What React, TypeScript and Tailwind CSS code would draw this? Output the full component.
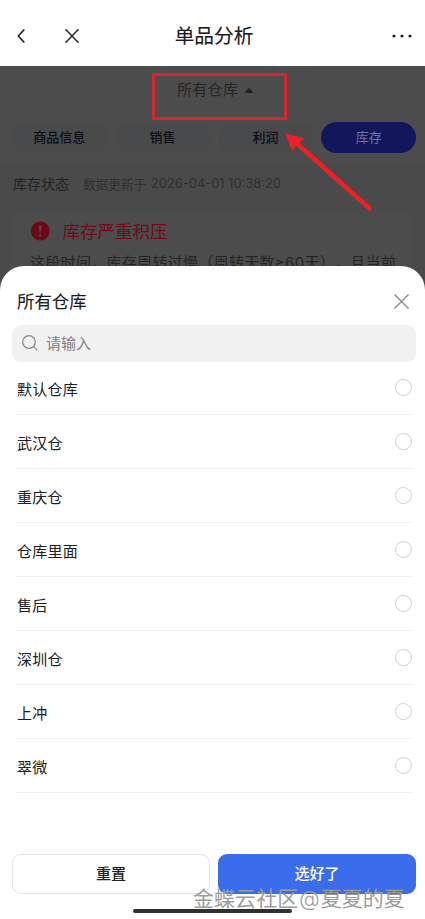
import { useState } from "react"

const warehouses = ["默认仓库", "武汉仓", "重庆仓", "仓库里面", "售后", "深圳仓", "上冲", "翠微"]

const tabs = ["商品信息", "销售", "利润", "库存"]

function Header() {
  return (
    <header className="relative h-[66px] shrink-0 flex items-center justify-between bg-white pl-[17px] pr-[13px] pt-[5px]">
      <div className="flex items-center gap-[40px]">
        <svg width="8" height="14" viewBox="0 0 8 14" fill="none" stroke="#222" strokeWidth="1.6">
          <path d="M7.3 0.5L1.3 7L7.3 13.5" />
        </svg>
        <svg width="14" height="14" viewBox="0 0 14 14" fill="none" stroke="#222" strokeWidth="1.5">
          <path d="M0.5 0.3L13.5 13.7M13.5 0.3L0.5 13.7" />
        </svg>
      </div>
      <h1 className="absolute inset-x-0 top-[20px] pl-[3px] text-center text-[19.7px] leading-[29px] font-normal text-[#1c1c1c] [-webkit-text-stroke:0.15px_#1c1c1c]">
        单品分析
      </h1>
      <svg width="20" height="4" viewBox="0 0 20 4" fill="#222">
        <circle cx="2" cy="2" r="1.6" />
        <circle cx="10" cy="2" r="1.6" />
        <circle cx="18" cy="2" r="1.6" />
      </svg>
    </header>
  )
}

function DimmedPage() {
  return (
    <section className="h-[224px] shrink-0 bg-[#4a4a4a]">
      <div className="h-[98px] bg-[#4c4c4c]">
        <div className="flex h-[56px] items-start gap-[7px] pl-[177px] pt-[12px]">
          <span className="text-[15px] leading-[22px] tracking-[0.3px] text-[#252525]">所有仓库</span>
          <svg className="mt-[10px]" width="8" height="5" viewBox="0 0 8 5" fill="#202020">
            <path d="M3.3 0.5Q4 0 4.7 0.5L7.6 3.7Q8 4.6 7.2 5H0.8Q0 4.6 0.4 3.7Z" />
          </svg>
        </div>
        <div className="grid grid-cols-4 gap-[8.5px] pl-[12px] pr-[9px]">
          {tabs.map((tab) => (
            <div
              key={tab}
              className={
                tab === "库存"
                  ? "h-[31px] rounded-full bg-[#12165a] text-center text-[13px] leading-[30px] font-normal text-[#74769a]"
                  : "h-[31px] rounded-full bg-[#484a4c] text-center text-[13px] leading-[30px] font-medium text-[#0c0d12]"
              }
            >
              {tab}
            </div>
          ))}
        </div>
      </div>
      <div className="flex h-[46px] items-start gap-[14px] pl-[13px] pt-[9px]">
        <span className="text-[14px] leading-[21px] text-[#232323]">库存状态</span>
        <span className="flex gap-[5px] text-[12.6px] leading-[21px] text-[#303030] whitespace-nowrap">
          数据更新于
          <span className="font-['Inter',sans-serif] text-[12.9px]">2026-04-01 10:38:20</span>
        </span>
      </div>
      <div className="mx-[12px] h-[80px] rounded-t-xl bg-[#4c4c4c] px-[18px] pt-[8px]">
        <div className="flex items-center gap-[12.5px]">
          <svg width="20" height="20" viewBox="0 0 20 20">
            <circle cx="10.2" cy="10" r="9.4" fill="#6c0917" />
            <path d="M8.7 4.5H11.7L11 11.5H9.4Z" fill="#51474a" />
            <circle cx="10.2" cy="14.2" r="1.3" fill="#51474a" />
          </svg>
          <h2 className="text-[17.5px] leading-[26px] font-normal text-[#710a19]">库存严重积压</h2>
        </div>
        <p className="mt-[6px] text-[15px] leading-[24px] tracking-[0.3px] whitespace-nowrap text-[#252525] [text-spacing-trim:space-all]">
          这段时间，库存周转过慢（周转天数<span className="font-['Inter',sans-serif]">≥60</span>天），且当前
        </p>
      </div>
    </section>
  )
}

function Annotation() {
  return (
    <svg className="pointer-events-none absolute left-0 top-0" width="425" height="230" viewBox="0 0 425 230" fill="none">
      <rect x="153.5" y="74.5" width="132" height="44" stroke="#d9252e" strokeWidth="3" />
      <path d="M298 144.5L369.5 208.5" stroke="#ed2026" strokeWidth="4.6" strokeLinecap="round" />
      <path d="M285.2 133.2L304.5 138.5L299 143L297 145L292 151.5Z" fill="#ed2026" />
    </svg>
  )
}

export default function App() {
  const [selected, setSelected] = useState<string | null>(null)

  return (
    <div className="relative flex h-[919px] w-[425px] flex-col overflow-hidden bg-white font-['Noto_Sans_CJK_SC',sans-serif]">
      <Header />
      <DimmedPage />

      {/* Warehouse sheet */}
      <div className="relative -mt-[24.5px] flex flex-1 flex-col rounded-t-[24px] bg-white">
        <div className="flex h-[59.5px] items-start justify-between px-[16px] pt-[22px]">
          <h2 className="pl-px text-[17.4px] leading-[26px] font-normal text-[#1c1c1c] [-webkit-text-stroke:0.1px_#1c1c1c]">
            所有仓库
          </h2>
          <svg className="mt-[6.5px]" width="15" height="15" viewBox="0 0 15 15" fill="none" stroke="#8c8c8c" strokeWidth="1.4">
            <path d="M0.4 0.4L14.6 14.6M14.6 0.4L0.4 14.6" />
          </svg>
        </div>

        <label className="ml-[12px] mr-[9px] flex h-[37px] shrink-0 items-center gap-[8.5px] rounded-[9px] bg-[#f1f1f1] pl-[9.5px] pb-px">
          <svg width="16" height="16" viewBox="0 0 16 16" fill="none" stroke="#888" strokeWidth="1.2">
            <circle cx="7" cy="7" r="6.3" />
            <path d="M11.4 11.4L15.3 15.3" />
          </svg>
          <input
            className="w-64 bg-transparent text-[15px] leading-[22px] text-[#333] outline-none placeholder:text-[#808080]"
            placeholder="请输入"
          />
        </label>

        <ul className="ml-[16px] mr-[13px] -mt-px">
          {warehouses.map((name) => (
            <li
              key={name}
              className="flex h-[54px] items-center justify-between border-b border-[#efefef]"
              onClick={() => setSelected(name)}
            >
              <span className="pl-px pt-[2px] text-[15px] leading-[22px] tracking-[0.25px] text-[#202020]">{name}</span>
              <span
                className={
                  selected === name
                    ? "mb-px size-[17px] rounded-full border-[5px] border-[#3a6cec]"
                    : "mb-px size-[17px] rounded-full border border-[#d0d0d0]"
                }
              />
            </li>
          ))}
        </ul>

        <div className="mt-[61px] grid grid-cols-2 gap-[8px] pl-[12px] pr-[9px] text-[15px] font-medium">
          <button className="h-[40px] rounded-[9px] border border-[#e2e2e2] pb-px text-[#202020]">重置</button>
          <button className="h-[40px] rounded-[9px] bg-[#3a6cec] pb-px text-white">选好了</button>
        </div>
      </div>

      {/* Home indicator */}
      <div className="absolute bottom-[6px] left-[133px] h-[4px] w-[159px] rounded-full bg-[#303030]" />
      <div className="absolute left-[193px] top-[882px] text-[21px] leading-[30px] tracking-[0.05px] whitespace-nowrap text-[#9c9c9c]">
        金蝶云社区<span className="px-px font-['Inter',sans-serif] font-light">@</span>夏夏的夏
      </div>
      <Annotation />
    </div>
  )
}
